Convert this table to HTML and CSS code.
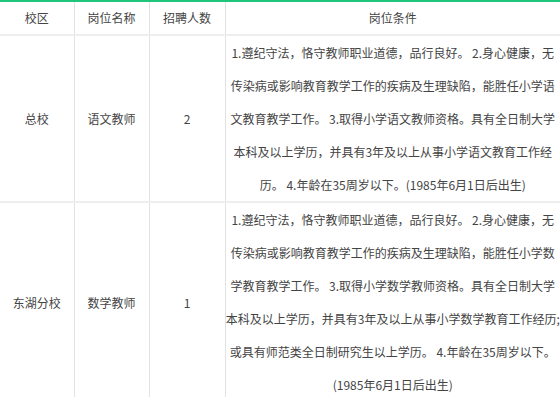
FILE: index.html
```html
<!DOCTYPE html>
<html lang="zh-CN">
<head>
<meta charset="utf-8">
<title>岗位</title>
<link rel="stylesheet" href="styles.css">
</head>
<body>
<table class="jobs">
  <colgroup>
    <col class="c-campus">
    <col class="c-post">
    <col class="c-num">
    <col class="c-req">
  </colgroup>
  <thead>
    <tr>
      <th>校区</th>
      <th>岗位名称</th>
      <th>招聘人数</th>
      <th>岗位条件</th>
    </tr>
  </thead>
  <tbody>
    <tr>
      <td>总校</td>
      <td>语文教师</td>
      <td>2</td>
      <td class="req">1.遵纪守法，恪守教师职业道德，品行良好。 2.身心健康，无传染病或影响教育教学工作的疾病及生理缺陷，能胜任小学语文教育教学工作。 3.取得小学语文教师资格。具有全日制大学本科及以上学历，并具有3年及以上从事小学语文教育工作经历。 4.年龄在35周岁以下。(1985年6月1日后出生)</td>
    </tr>
    <tr>
      <td>东湖分校</td>
      <td>数学教师</td>
      <td>1</td>
      <td class="req">1.遵纪守法，恪守教师职业道德，品行良好。 2.身心健康，无传染病或影响教育教学工作的疾病及生理缺陷，能胜任小学数学教育教学工作。 3.取得小学数学教师资格。具有全日制大学本科及以上学历，并具有3年及以上从事小学数学教育工作经历;或具有师范类全日制研究生以上学历。 4.年龄在35周岁以下。(1985年6月1日后出生)</td>
    </tr>
  </tbody>
</table>
</body>
</html>
```
FILE: styles.css
```css
html, body {
  margin: 0;
  padding: 0;
  background: #fff;
}
body {
  font-family: "Microsoft YaHei", "Noto Sans CJK SC", sans-serif;
  font-size: 12px;
  color: #444;
  overflow: hidden;
}
.jobs {
  border-collapse: collapse;
  table-layout: fixed;
  width: 560px;
  border-top: 2px solid #1fc67a;
}
.c-campus { width: 74px; }
.c-post { width: 75px; }
.c-num { width: 76px; }
.c-req { width: 335px; }
.jobs th,
.jobs td {
  padding: 0;
  text-align: center;
  vertical-align: middle;
  border-left: 1px solid #e2e2e2;
  border-bottom: 2px solid #eeeeee;
  font-weight: normal;
}
.jobs th:first-child,
.jobs td:first-child {
  border-left: none;
}
.jobs th {
  height: 32px;
  line-height: 32px;
}
.jobs td {
  line-height: 33px;
}
.jobs td.req {
  word-break: break-all;
}
```
